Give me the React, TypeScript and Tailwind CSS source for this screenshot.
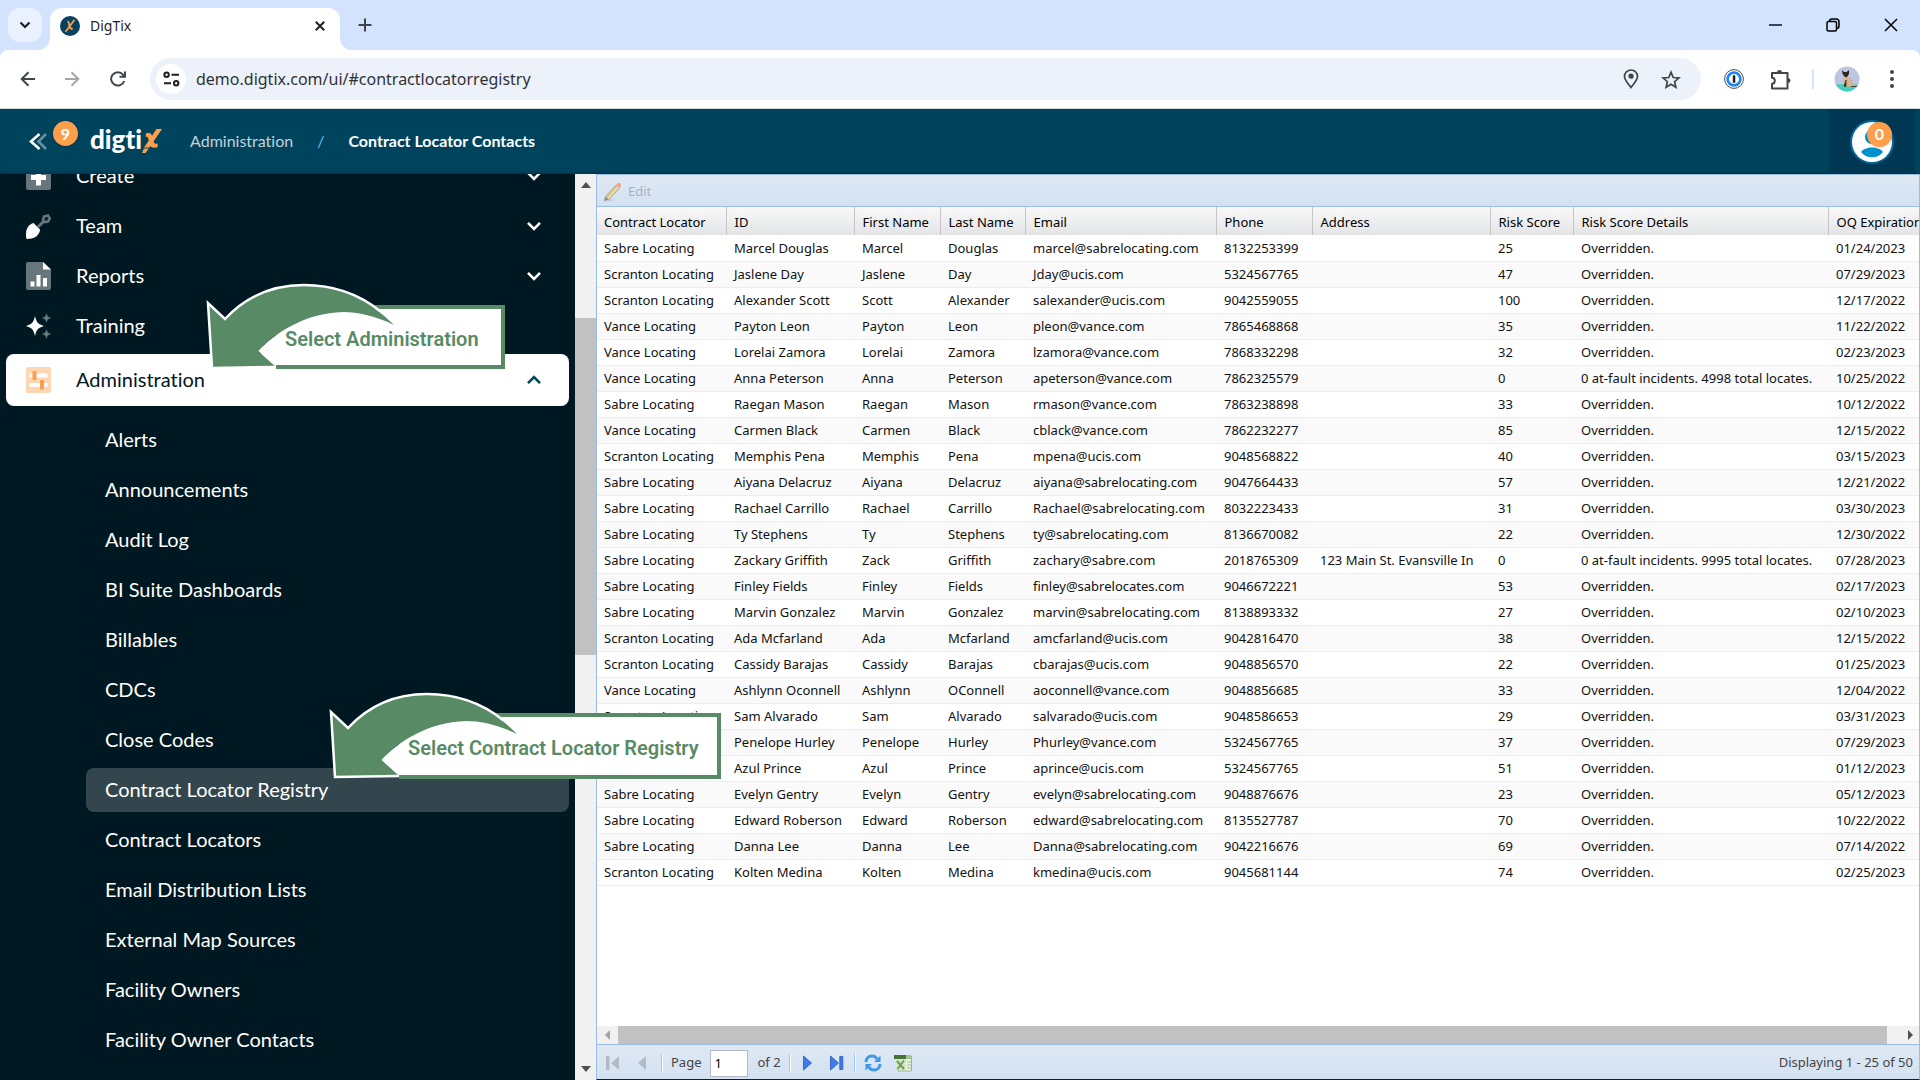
import React from 'react';

const MENU = ['Create', 'Team', 'Reports', 'Training'];

const SUBMENU = [
  'Alerts', 'Announcements', 'Audit Log', 'BI Suite Dashboards', 'Billables', 'CDCs', 'Close Codes',
  'Contract Locator Registry', 'Contract Locators', 'Email Distribution Lists', 'External Map Sources',
  'Facility Owners', 'Facility Owner Contacts',
];

const COLUMNS = ['Contract Locator', 'ID', 'First Name', 'Last Name', 'Email', 'Phone', 'Address', 'Risk Score', 'Risk Score Details', 'OQ Expiration'];

const O = 'Overridden.';
const ROWS = [
  ['Sabre Locating', 'Marcel Douglas', 'Marcel', 'Douglas', 'marcel@sabrelocating.com', '8132253399', '', '25', O, '01/24/2023'],
  ['Scranton Locating', 'Jaslene Day', 'Jaslene', 'Day', 'Jday@ucis.com', '5324567765', '', '47', O, '07/29/2023'],
  ['Scranton Locating', 'Alexander Scott', 'Scott', 'Alexander', 'salexander@ucis.com', '9042559055', '', '100', O, '12/17/2022'],
  ['Vance Locating', 'Payton Leon', 'Payton', 'Leon', 'pleon@vance.com', '7865468868', '', '35', O, '11/22/2022'],
  ['Vance Locating', 'Lorelai Zamora', 'Lorelai', 'Zamora', 'lzamora@vance.com', '7868332298', '', '32', O, '02/23/2023'],
  ['Vance Locating', 'Anna Peterson', 'Anna', 'Peterson', 'apeterson@vance.com', '7862325579', '', '0', '0 at-fault incidents. 4998 total locates.', '10/25/2022'],
  ['Sabre Locating', 'Raegan Mason', 'Raegan', 'Mason', 'rmason@vance.com', '7863238898', '', '33', O, '10/12/2022'],
  ['Vance Locating', 'Carmen Black', 'Carmen', 'Black', 'cblack@vance.com', '7862232277', '', '85', O, '12/15/2022'],
  ['Scranton Locating', 'Memphis Pena', 'Memphis', 'Pena', 'mpena@ucis.com', '9048568822', '', '40', O, '03/15/2023'],
  ['Sabre Locating', 'Aiyana Delacruz', 'Aiyana', 'Delacruz', 'aiyana@sabrelocating.com', '9047664433', '', '57', O, '12/21/2022'],
  ['Sabre Locating', 'Rachael Carrillo', 'Rachael', 'Carrillo', 'Rachael@sabrelocating.com', '8032223433', '', '31', O, '03/30/2023'],
  ['Sabre Locating', 'Ty Stephens', 'Ty', 'Stephens', 'ty@sabrelocating.com', '8136670082', '', '22', O, '12/30/2022'],
  ['Sabre Locating', 'Zackary Griffith', 'Zack', 'Griffith', 'zachary@sabre.com', '2018765309', '123 Main St. Evansville In', '0', '0 at-fault incidents. 9995 total locates.', '07/28/2023'],
  ['Sabre Locating', 'Finley Fields', 'Finley', 'Fields', 'finley@sabrelocates.com', '9046672221', '', '53', O, '02/17/2023'],
  ['Sabre Locating', 'Marvin Gonzalez', 'Marvin', 'Gonzalez', 'marvin@sabrelocating.com', '8138893332', '', '27', O, '02/10/2023'],
  ['Scranton Locating', 'Ada Mcfarland', 'Ada', 'Mcfarland', 'amcfarland@ucis.com', '9042816470', '', '38', O, '12/15/2022'],
  ['Scranton Locating', 'Cassidy Barajas', 'Cassidy', 'Barajas', 'cbarajas@ucis.com', '9048856570', '', '22', O, '01/25/2023'],
  ['Vance Locating', 'Ashlynn Oconnell', 'Ashlynn', 'OConnell', 'aoconnell@vance.com', '9048856685', '', '33', O, '12/04/2022'],
  ['Scranton Locating', 'Sam Alvarado', 'Sam', 'Alvarado', 'salvarado@ucis.com', '9048586653', '', '29', O, '03/31/2023'],
  ['Vance Locating', 'Penelope Hurley', 'Penelope', 'Hurley', 'Phurley@vance.com', '5324567765', '', '37', O, '07/29/2023'],
  ['Scranton Locating', 'Azul Prince', 'Azul', 'Prince', 'aprince@ucis.com', '5324567765', '', '51', O, '01/12/2023'],
  ['Sabre Locating', 'Evelyn Gentry', 'Evelyn', 'Gentry', 'evelyn@sabrelocating.com', '9048876676', '', '23', O, '05/12/2023'],
  ['Sabre Locating', 'Edward Roberson', 'Edward', 'Roberson', 'edward@sabrelocating.com', '8135527787', '', '70', O, '10/22/2022'],
  ['Sabre Locating', 'Danna Lee', 'Danna', 'Lee', 'Danna@sabrelocating.com', '9042216676', '', '69', O, '07/14/2022'],
  ['Scranton Locating', 'Kolten Medina', 'Kolten', 'Medina', 'kmedina@ucis.com', '9045681144', '', '74', O, '02/25/2023'],
];

function Chevron({ up = false }: { up?: boolean }) {
  return (
    <svg width="14" height="10" viewBox="0 0 14 10" fill="none" stroke="currentColor" strokeWidth="2.6" aria-hidden="true">
      <path d={up ? 'M1 8.2 7 2l6 6.2' : 'M1 1.8 7 8l6-6.2'} />
    </svg>
  );
}

function TabStrip() {
  return (
    <div className="flex h-[50px] shrink-0 items-center bg-[#d3e3fd] pl-2 text-[#1f1f1f]">
      <button aria-label="Search tabs" className="flex size-[34px] items-center justify-center rounded-xl bg-[#e9f0fe]">
        <svg width="12" height="8" viewBox="0 0 12 8" fill="none" stroke="currentColor" strokeWidth="2.2"><path d="M1.500 1.500 6 6l4.500-4.500" /></svg>
      </button>
      <div className="relative ml-2 flex h-[42px] w-[290px] items-center self-end rounded-t-xl bg-white pr-3 pb-1.5 pl-2.5">
        <svg width="12" height="12" viewBox="0 0 12 12" fill="#fff" className="absolute bottom-0 -left-3"><path d="M12 0v12H0A12 12 0 0 0 12 0z" /></svg>
        <svg width="12" height="12" viewBox="0 0 12 12" fill="#fff" className="absolute -right-3 bottom-0"><path d="M0 0v12h12A12 12 0 0 1 0 0z" /></svg>
        <svg width="20" height="20" viewBox="0 0 20 20" aria-hidden="true">
          <circle cx="10" cy="10" r="10" fill="#07415e" />
          <path d="M14.500 3.800 8.800 11.500 5.500 15.800" fill="none" stroke="#f8a04e" strokeWidth="1.8" />
          <path d="M7.500 5.500c2 0 1.300 3.800 2.500 6 .6 1.300 1.500 1.500 2.800 1.200" fill="none" stroke="#f8a04e" strokeWidth="1.8" />
        </svg>
        <span className="ml-2.5 flex-1 font-['Noto_Sans',sans-serif] text-sm">DigTix</span>
        <button aria-label="Close tab" className="flex size-4 items-center justify-center">
          <svg width="10" height="10" viewBox="0 0 10 10" stroke="currentColor" strokeWidth="2"><path d="m.8.8 8.400 8.400M9.200.8.8 9.200" /></svg>
        </button>
      </div>
      <button aria-label="New tab" className="ml-[18px] flex size-3.5 items-center justify-center text-[#40454d]">
        <svg width="14" height="14" viewBox="0 0 14 14" stroke="currentColor" strokeWidth="2"><path d="M7 .5v13M.5 7h13" /></svg>
      </button>
      <div className="ml-auto flex items-center gap-11 pr-[22px] text-black">
        <button aria-label="Minimize"><svg width="14" height="14" viewBox="0 0 14 14" stroke="currentColor" strokeWidth="1.4"><path d="M1 7h13" /></svg></button>
        <button aria-label="Restore"><svg width="14" height="14" viewBox="0 0 14 14" fill="none" stroke="currentColor" strokeWidth="1.5"><rect x="1" y="3.500" width="9.500" height="9.500" rx="1.500" /><path d="M3.500 3.500C3.500 1.500 4.500 1 6 1h4c2 0 3 1 3 3v4c0 1.500-.5 2.500-2.500 2.500" /></svg></button>
        <button aria-label="Close window"><svg width="14" height="14" viewBox="0 0 14 14" stroke="currentColor" strokeWidth="1.5"><path d="m1 1 12 12M13 1 1 13" /></svg></button>
      </div>
    </div>
  );
}

function AddressBar() {
  return (
    <div className="shrink-0 bg-[#d3e3fd]">
      <div className="flex h-[59px] items-center rounded-t-lg border-b border-[#cfd8d8] bg-white pr-[18px] pl-5 text-[#40454a]">
        <button aria-label="Back"><svg width="16" height="16" viewBox="0 0 16 16" fill="none" stroke="currentColor" strokeWidth="2"><path d="M15 8H2M8.500 1.200 1.700 8l6.800 6.800" /></svg></button>
        <button aria-label="Forward" disabled className="ml-7 text-[#a5a7a9]"><svg width="16" height="16" viewBox="0 0 16 16" fill="none" stroke="currentColor" strokeWidth="2"><path d="M1 8h13M7.500 1.200 14.300 8l-6.800 6.800" /></svg></button>
        <button aria-label="Reload" className="ml-[30px]">
          <svg width="16" height="16" viewBox="0 0 16 16" fill="none" stroke="currentColor" strokeWidth="2"><path d="M14.200 10A6.700 6.700 0 1 1 13 3.600l1.500 1.700M15 .5v5.300H9.500" /></svg>
        </button>
        <div className="ml-6 flex h-[42px] flex-1 items-center rounded-full bg-[#ecf1fa] pr-5 pl-1.5">
          <button aria-label="View site information" className="flex size-[30px] items-center justify-center rounded-full bg-white text-[#1f1f1f]">
            <svg width="17" height="16" viewBox="0 0 17 16" fill="none" stroke="currentColor" strokeWidth="2"><circle cx="3.600" cy="3.800" r="2.200" /><path d="M8.500 3.800H16M1 12.200h7" /><circle cx="13.200" cy="12.200" r="2.200" /></svg>
          </button>
          <input aria-label="Address" defaultValue="demo.digtix.com/ui/#contractlocatorregistry" className="ml-2.5 min-w-0 flex-1 bg-transparent font-['Noto_Sans',sans-serif] text-base text-[#303236] outline-none" />
          <button aria-label="Location"><svg width="16" height="20" viewBox="0 0 16 20" fill="none" stroke="currentColor" strokeWidth="1.700"><path d="M8 18.500C4.500 14 1.500 11 1.500 7.500a6.500 6.500 0 0 1 13 0c0 3.500-3 6.500-6.500 11z" /><circle cx="8" cy="7.200" r="1.800" fill="currentColor" /></svg></button>
          <button aria-label="Bookmark this page" className="ml-[22px]"><svg width="20" height="19" viewBox="0 0 20 19" fill="none" stroke="currentColor" strokeWidth="1.700"><path d="m10 2.200 2.200 5.300 5.700.5-4.300 3.700 1.300 5.600L10 14.300l-4.900 3 1.300-5.600L2.100 8l5.700-.5z" /></svg></button>
        </div>
        <button aria-label="Password manager" className="ml-[23px]">
          <svg width="20" height="20" viewBox="0 0 20 20"><circle cx="10" cy="10" r="9.400" fill="#fff" stroke="#4a4a4a" strokeWidth="1" /><circle cx="10" cy="10" r="6.400" fill="#fff" stroke="#1a86f9" strokeWidth="2.600" /><rect x="8.800" y="6.200" width="2.500" height="7.600" rx=".6" fill="#222" /></svg>
        </button>
        <button aria-label="Extensions" className="ml-[26px]">
          <svg width="21" height="21" viewBox="0 0 21 21" fill="none" stroke="currentColor" strokeWidth="2" strokeLinejoin="round"><path d="M2 4h15.500v15.500H2v-4.800c3.700 0 3.700-6 0-6z" /><path d="M7 3.500a2.500 2.500 0 0 1 5 0zM18 9a2.500 2.500 0 0 1 0 5z" fill="currentColor" stroke="none" /></svg>
        </button>
        <span className="ml-[21px] h-5 w-0.5 bg-[#d3e3fd]" />
        <button aria-label="Profile" className="ml-5">
          <svg width="26" height="26" viewBox="0 0 26 26"><defs><clipPath id="profile"><circle cx="13" cy="13" r="12.500" /></clipPath></defs><g clipPath="url(#profile)"><path fill="#bcc5e2" d="M0 0h26v26H0z" /><path fill="#45cfc0" d="M0 19c8-2 16 0 26-.5V26H0z" /><path fill="#d3b48c" d="M9 8c1-1 5-1 5 1l1 3c3 1 4 4 4 7l3 1.500H9.500L10 13z" /><path fill="#2d2622" d="m8 4 2 2h2.500L15 4v4l-2 3h-2L8.500 8z" /><path d="M10 20.500h2V14zM17 20.500h6" stroke="#55443a" /></g></svg>
        </button>
        <button aria-label="Browser menu" className="ml-[22px]"><svg width="20" height="20" viewBox="0 0 20 20" fill="currentColor"><circle cx="10" cy="3" r="2" /><circle cx="10" cy="10" r="2" /><circle cx="10" cy="17" r="2" /></svg></button>
      </div>
    </div>
  );
}

function AppHeader() {
  return (
    <header className="relative z-10 flex h-[65px] shrink-0 items-center bg-[#00435d] pl-[29px] font-[Lato,sans-serif] [font-variant-ligatures:none] shadow-[inset_0_-3px_3px_-2px_rgba(0,0,0,0.25)]">
      <button aria-label="Collapse menu, 9 notifications" className="flex items-center">
        <svg width="18" height="17" viewBox="0 0 18 17" fill="none" strokeWidth="2.600"><path d="M17 1 9.500 8.500 17 16" stroke="#6791a2" /><path d="M10.500 1 2 8.500l8.500 7.500" stroke="#fff" /></svg>
        <span className="mb-4 ml-1.5 flex size-[25px] items-center justify-center rounded-full bg-[#fd9e4b] text-base leading-none font-bold text-white shadow">9</span>
      </button>
      <a href="#home" aria-label="digtix" className="mb-0.5 ml-3 flex items-center">
        <span className="-mt-1 text-[26px] leading-8 font-black text-white">digti</span>
        <svg width="20" height="26" viewBox="0 0 20 26"><path d="M14.500 1H20L10.500 15 7.500 19.500H2L6.500 13z" fill="#fd9e4b" /><path d="M4 5.500c4.500-1.500 5.800.5 6.600 4l1 4.300c.4 1.700 1.400 2.200 4 1.700v3.700c-5 1.200-7.200.2-8.200-4L6.300 10.700C5.900 9 5.500 8.600 3.600 8.800z" fill="#fd9e4b" /><path d="M1.800 20.500h5L3.600 25H0z" fill="#fd9e4b" /></svg>
      </a>
      <nav aria-label="Breadcrumb" className="mb-0.5 ml-7 flex items-center text-base font-bold">
        <a href="#administration" className="font-normal text-[#c3d2d9]">Administration</a>
        <span className="mx-6 font-normal text-[#5cc1ec]">/</span>
        <span className="text-white">Contract Locator Contacts</span>
      </nav>
      <div className="mr-[5px] ml-auto flex h-full w-[86px] items-center justify-center bg-[#003853]">
        <button aria-label="Account, 0 alerts" className="relative">
          <svg width="44" height="44" viewBox="0 0 44 44" className="block"><circle cx="22" cy="22" r="22" fill="#00699b" /><circle cx="22" cy="22" r="20" fill="#fff" /><circle cx="22" cy="17" r="7" fill="#0090cb" /><path d="M11 32c4-6 18-6 22 0-5 7-17 7-22 0z" fill="#0090cb" /></svg>
          <span className="absolute top-0.5 left-[17px] flex size-[25px] items-center justify-center rounded-full bg-[#fd9e4b] text-base leading-none font-bold text-white shadow">0</span>
        </button>
      </div>
    </header>
  );
}

const MENU_ICONS: Record<string, React.ReactNode> = {
  Create: <><rect y="1" width="25" height="27" rx="2" fill="#66767c" /><path d="M10 7.500h5V13h5v5h-5v5.500h-5V18H5v-5h5z" fill="#fff" /></>,
  Team: <><path d="m12 15 6-6" stroke="#66767c" strokeWidth="3" /><path d="m17 8 1-3.500 4-1 1.800 3-1.800 3L18.500 10z" fill="none" stroke="#66767c" strokeWidth="2.600" /><path d="M0 22c0-5 2-8.500 6-10.500l1.500-.5 6.500 6.500c-.5 4.500-3.500 8-8.500 9L1 27c-1-.5-1-2-1-5z" fill="#fff" /></>,
  Reports: <><path d="M2 0h15l8 7.500V26a2 2 0 0 1-2 2H2a2 2 0 0 1-2-2V2a2 2 0 0 1 2-2z" fill="#66767c" /><path d="M17 0v7.500h8z" fill="#fff" /><path d="M4.500 19.500h4v5h-4zM10.500 13h4v11.500h-4zM17 16h4v8.500h-4z" fill="#fff" /></>,
  Training: <><path d="M9 4c1.500 6.500 3 8 9 10-6 2-7.500 3.500-9 10-1.500-6.500-3-8-9-10 6-2 7.500-3.500 9-10z" fill="#fff" /><path d="M20.500 1c.8 3.200 1.500 3.900 4.500 5-3 1.100-3.700 1.800-4.500 5-.8-3.200-1.500-3.900-4.500-5 3-1.100 3.700-1.800 4.500-5zM20.500 17c.8 3.200 1.500 3.900 4.500 5-3 1.100-3.700 1.800-4.500 5-.8-3.200-1.500-3.900-4.500-5 3-1.100 3.700-1.800 4.500-5z" fill="#66767c" /></>,
};

function Sidebar() {
  return (
    <aside className="flex w-[596px] shrink-0 overflow-hidden bg-[#001821] font-[Lato,sans-serif] text-xl text-white [font-variant-ligatures:none]">
      <nav aria-label="Main" className="-mt-5 flex flex-1 flex-col">
        <ul className="flex flex-col gap-1.5">
          {MENU.map((name) => (
            <li key={name}>
              <button className="flex h-11 w-full items-center pr-[34px] pl-[26px] text-left">
                <svg width="25" height="28" viewBox="0 0 25 28" aria-hidden="true">{MENU_ICONS[name]}</svg>
                <span className="ml-[25px] flex-1 pb-0.5">{name}</span>
                {name !== 'Training' && <Chevron />}
              </button>
            </li>
          ))}
        </ul>
        <button aria-expanded="true" className="mx-1.5 mt-1.5 flex h-[52px] shrink-0 items-center rounded-lg bg-white pr-7 pl-5 text-left text-[#001821]">
          <svg width="25" height="26" viewBox="0 0 25 26" aria-hidden="true"><rect width="25" height="26" rx="2" fill="#fed6b3" /><path d="M3.500 6.500h18v4h-18zM3.500 16h18v4h-18z" fill="#fff" /><rect x="6.500" y="4" width="4" height="9" rx="1" fill="#fd9e4b" /><rect x="14" y="13" width="4" height="9.500" rx="1" fill="#fd9e4b" /></svg>
          <span className="ml-[25px] flex-1 pb-0.5">Administration</span>
          <span className="text-[#00435d]"><Chevron up /></span>
        </button>
        <ul className="mt-3 flex flex-col gap-1.5 pr-1.5 pl-[86px]">
          {SUBMENU.map((name) => (
            <li key={name} className="shrink-0">
              <a href={'#' + name.replace(/ /g, '').toLowerCase()} className={name === 'Contract Locator Registry' ? 'flex h-11 items-center rounded-lg bg-[#33464d] pb-0.5 pl-[19px]' : 'flex h-11 items-center pb-0.5 pl-[19px]'}>{name}</a>
            </li>
          ))}
        </ul>
      </nav>
      <div className="flex w-[21px] flex-col items-center bg-[#f1f1f1]" aria-hidden="true">
        <svg width="10" height="6" viewBox="0 0 10 6" className="mt-2"><path d="M0 6 5 0l5 6z" fill="#505050" /></svg>
        <div className="mt-[130px] h-[337px] w-full bg-[#c1c1c1]" />
        <svg width="10" height="6" viewBox="0 0 10 6" className="mt-auto mb-2"><path d="m0 0 5 6 5-6z" fill="#505050" /></svg>
      </div>
    </aside>
  );
}

function Separator() {
  return <span className="h-[18px] w-0.5 border-r border-white bg-[#98c8ff]" />;
}

function Grid() {
  return (
    <main className="flex min-w-0 flex-1 flex-col border-x border-b border-[#99bce8] border-b-[#10202c] bg-white font-['Noto_Sans',sans-serif] text-[13px] text-[#111]">
      <div className="flex h-[33px] shrink-0 items-center border-y border-[#99bce8] bg-linear-to-b from-[#dfe9f5] to-[#d3e1f1] px-1.5 pt-0.5">
        <button disabled className="flex items-center gap-1.5 text-[#a9b1bb]">
          <svg width="19" height="20" viewBox="0 0 19 20" aria-hidden="true"><path d="M1 19c3-1 8-2 11-1l-8 2z" fill="#c9ced6" /><path d="M2 15 13 3l3.500 3L6 17.500z" fill="#d9c48d" stroke="#a9a18d" strokeWidth=".8" /><path d="m5 16.500 10.500-12" stroke="#efe2b4" strokeWidth="1.500" /><path d="m13 3 1.500-1.800c1.500-1.500 4.700 1 3.300 2.800L16.500 6z" fill="#e9a698" /><path d="m2 15 4 2.500L1 19z" fill="#8e8e8e" /></svg>
          Edit
        </button>
      </div>
      <div className="min-h-0 flex-1 overflow-hidden">
        <table className="w-full min-w-[1340px] table-fixed border-collapse text-left whitespace-nowrap">
          <colgroup>
            <col className="w-[129px]" /><col className="w-[128px]" /><col className="w-[86px]" /><col className="w-[85px]" /><col className="w-[191px]" />
            <col className="w-[96px]" /><col className="w-[178px]" /><col className="w-[83px]" /><col className="w-[255px]" /><col />
          </colgroup>
          <thead>
            <tr className="h-7 bg-linear-to-b from-[#f9f9f9] to-[#e3e4e6]">
              {COLUMNS.map((c) => <th key={c} scope="col" className="border-r border-[#c5c5c5] p-0 pt-0.5 pl-2 leading-5 font-normal text-black first:pl-[7px]">{c}</th>)}
            </tr>
          </thead>
          <tbody>
            {ROWS.map((row) => (
              <tr key={row[1]} className="h-[26px] border-b border-[#ededed] even:bg-[#fafafa]">
                {row.map((cell, i) => <td key={i} className="p-0 pl-2 leading-5 first:pl-[7px]">{cell}</td>)}
              </tr>
            ))}
          </tbody>
        </table>
      </div>
      <div className="flex h-[18px] shrink-0 items-center bg-[#f1f1f1]" aria-hidden="true">
        <svg width="5" height="10" viewBox="0 0 5 10" className="mx-2"><path d="M5 0v10L0 5z" fill="#a3a3a3" /></svg>
        <div className="h-full flex-1 bg-[#c1c1c1]" />
        <svg width="5" height="10" viewBox="0 0 5 10" className="mr-1.5 ml-[21px]"><path d="M0 0v10l5-5z" fill="#505050" /></svg>
      </div>
      <div className="flex h-[35px] shrink-0 items-center border-t border-[#99bce8] bg-linear-to-b from-[#dfe9f5] to-[#d3e1f1] pt-0.5 pr-1.5 pl-[9px] text-[#444]">
        <button aria-label="First page" disabled><svg width="14" height="16" viewBox="0 0 14 16"><path d="M0 1h3.500v14H0zM13 1v14L5 8z" fill="#b4bbc4" /></svg></button>
        <button aria-label="Previous page" disabled className="mr-3.5 ml-[18px]"><svg width="9" height="16" viewBox="0 0 9 16"><path d="M8 1v14L0 8z" fill="#b4bbc4" /></svg></button>
        <Separator />
        <label htmlFor="page" className="ml-2">Page</label>
        <input id="page" defaultValue="1" className="mr-2.5 ml-2 h-[27px] w-[38px] border border-[#b5b8c8] bg-white px-1 text-black outline-none" />
        <span className="mr-2">of 2</span>
        <Separator />
        <button aria-label="Next page" className="ml-3"><svg width="9" height="16" viewBox="0 0 9 16"><path d="M.5 1v14L8.500 8z" fill="#3f7bea" stroke="#2a55c4" strokeWidth=".8" /></svg></button>
        <button aria-label="Last page" className="mr-2.5 ml-[18px]"><svg width="14" height="16" viewBox="0 0 14 16" fill="#3f7bea" stroke="#2a55c4" strokeWidth=".8"><path d="M.5 1v14L8.500 8zM9.800 1.400h3v13.200h-3z" /></svg></button>
        <Separator />
        <button aria-label="Refresh" className="ml-2"><svg width="18" height="18" viewBox="0 0 18 18" fill="none" stroke="#3f97e6" strokeWidth="3"><path d="M2 8c0-4 3-6 6-6 2.500 0 4 1 5 3M16 10c0 4-3 6-6 6-2.500 0-4-1-5-3" /><path d="M16.500 1.500v6.500H10zM1.500 16.500V10H8z" fill="#3f97e6" stroke="none" /></svg></button>
        <button aria-label="Export to Excel" className="ml-3"><svg width="19" height="18" viewBox="0 0 19 18"><path d="M4 2h13.500v15H4z" fill="#e9f2e1" stroke="#9cb88a" /><path d="M0 1h12v4H0z" fill="#47733a" /><path d="M12 1h5v4h-5z" fill="#a3c491" /><path d="M1 5h11v11H1z" fill="#d5e6c9" /><path d="m3 7 7 8M10 6.500 3.500 15" stroke="#6b9c5b" strokeWidth="2" /><path d="M13 8h4M13 11h4M13 14h4" stroke="#9cc487" /></svg></button>
        <span className="ml-auto">Displaying 1 - 25 of 50</span>
      </div>
    </main>
  );
}

function Callout({ text, place, box }: { text: string; place: string; box: string }) {
  return (
    <div className={place}>
      <div className={box} />
      <svg width="200" height="96" viewBox="0 0 200 96" className="absolute top-0 left-0" aria-hidden="true">
        <path d="M58 76C75 58 105 38 143 37c15 0 33 4 51 13v36H76V92z" fill="#fff" />
        <path d="M8 28 25 44C50 17 78 10 104 10c40 0 68 18 90 40-18-9-36-13-51-13-38 1-68 21-85 39l18 16-64 1z" fill="#588b65" />
        <path d="m76 92-64 1L8 28l17 16C50 17 78 10 104 10c30 0 56 10 76 26" fill="none" stroke="#fff" strokeWidth="2.500" />
      </svg>
      <p className="absolute top-[50px] left-[85px] font-[Roboto,sans-serif] text-xl leading-7 font-semibold whitespace-nowrap text-[#588b65]">{text}</p>
    </div>
  );
}

export default function App() {
  return (
    <div className="relative flex h-screen flex-col overflow-hidden">
      <TabStrip />
      <AddressBar />
      <AppHeader />
      <div className="flex min-h-0 flex-1">
        <Sidebar />
        <Grid />
      </div>
      <Callout
        text="Select Administration"
        place="absolute left-[200px] top-[275px] z-20"
        box="ml-[76px] mt-[30px] h-16 w-[229px] border-4 border-l-0 border-[#588b65] bg-white"
      />
      <Callout
        text="Select Contract Locator Registry"
        place="absolute left-[323px] top-[684px] z-20"
        box="ml-[76px] mt-[29px] h-[66px] w-[322px] border-4 border-l-0 border-[#588b65] bg-white"
      />
    </div>
  );
}
